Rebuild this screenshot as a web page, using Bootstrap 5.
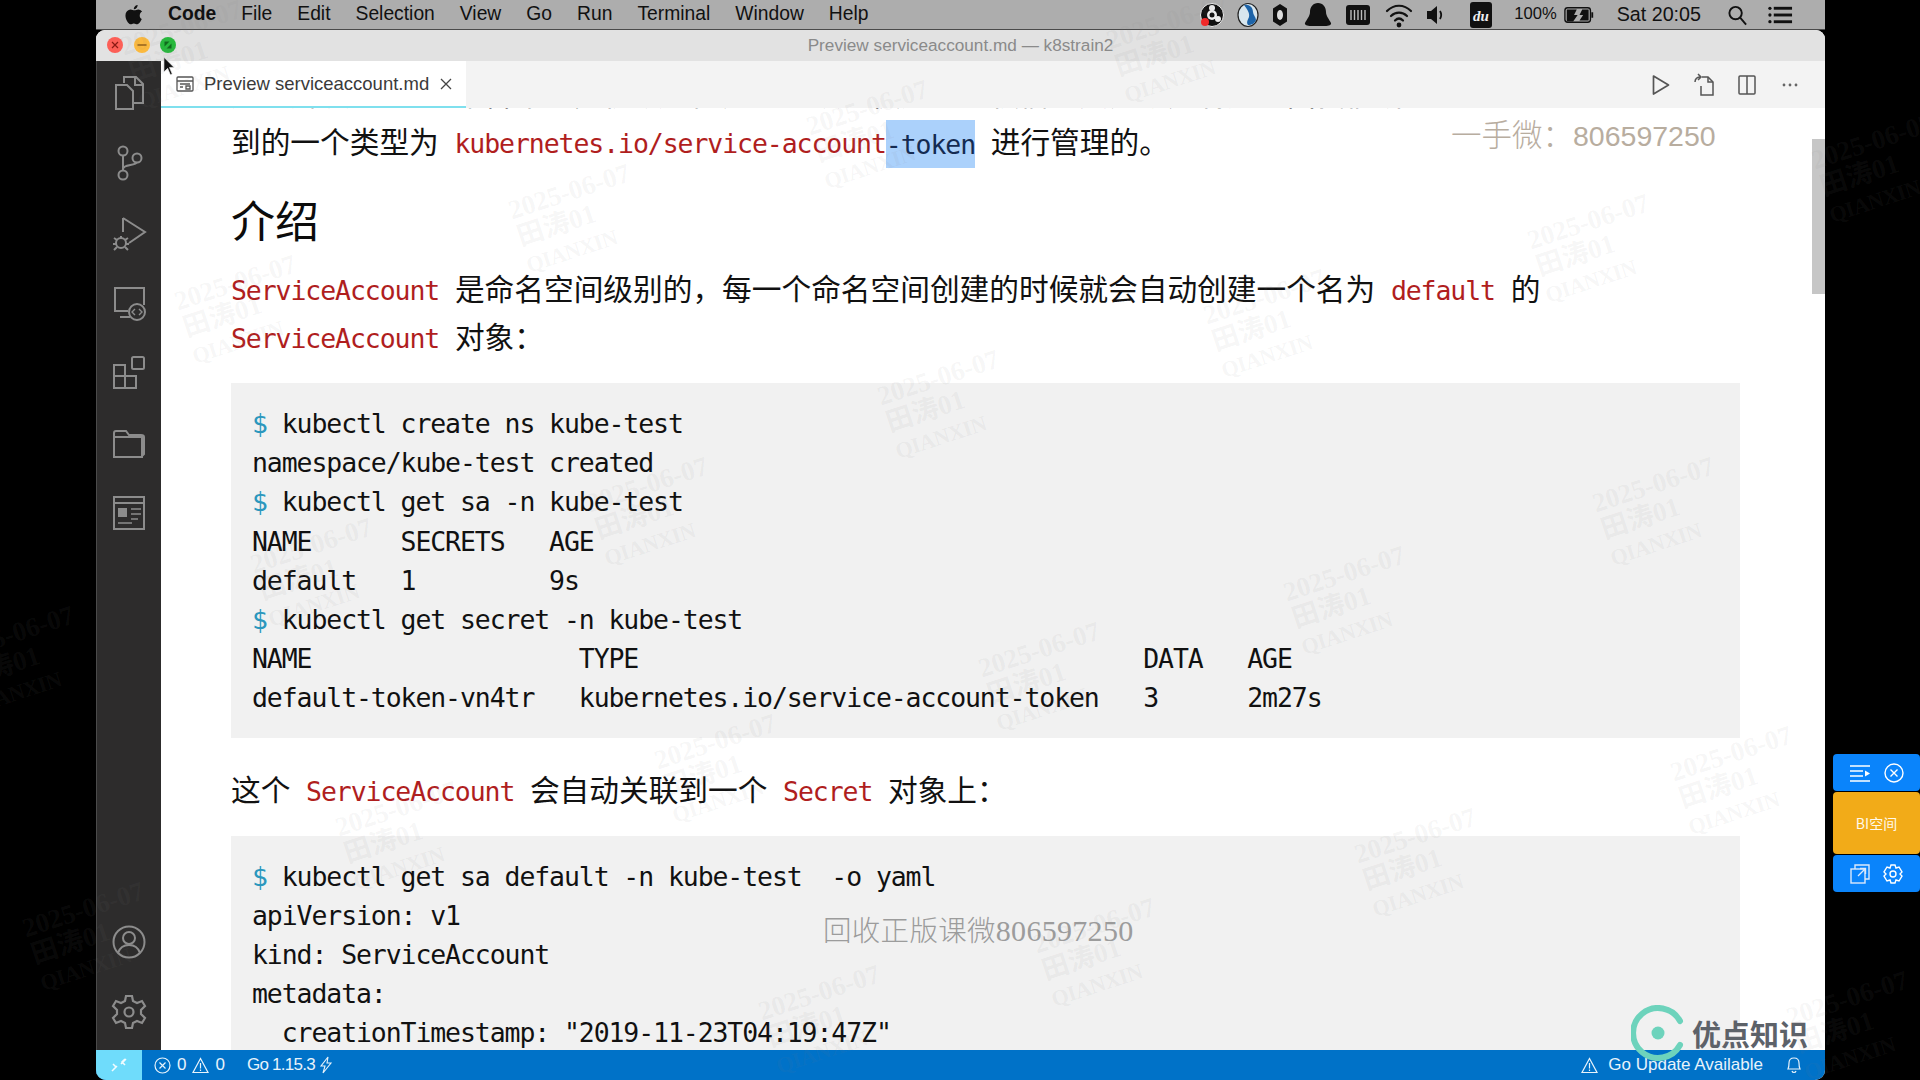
<!DOCTYPE html>
<html lang="zh-CN">
<head>
<meta charset="utf-8">
<title>Preview serviceaccount.md — k8strain2</title>
<link href="https://cdn.jsdelivr.net/npm/bootstrap@5.3.0/dist/css/bootstrap.min.css" rel="stylesheet">
<style>
html,body{height:100%;margin:0;background:#000;overflow:hidden}
body{font-family:"Liberation Sans","Noto Sans CJK SC",sans-serif}
.stage{width:1920px;height:1080px;position:relative;overflow:hidden;background:#000}
.mac-shell{width:1729px;height:1080px;margin-left:96px}
.mac-menu{height:30px;background:#adadad;border-bottom:1px solid #4a4a4a;padding:0 32px 0 29px;font-size:19.3px;color:#111;gap:25px}
.mac-menu b{font-weight:700}
.tray-pct{font-size:16.6px;margin-left:21px}
.tray-time{font-size:19.7px;margin-left:22px}
.t10{margin-left:10px}.t9{margin-left:9px}.t13{margin-left:13px}.t12{margin-left:12px}.t14{margin-left:14px}.t24{margin-left:24px}.t8{margin-left:7px}.t27{margin-left:26px}.t20{margin-left:20px}
.win{height:1050px;border-radius:9px 9px 10px 10px;overflow:hidden;background:#fff}
.title-row{height:31px;background:#e2e2e2;color:#8a8a8a;font-size:17.2px;position:relative;padding-top:1px}
.lights{left:11px;top:7px;gap:10.500px}
.body-row{height:989px}
.act-bar{width:65px;background:#2d2c2c;border-left:1px solid #4b4b4b;flex:none}
.act-item{height:70px;padding-bottom:6px}
.editor{min-width:0}
.tab-row{height:47px;background:#f3f3f3;flex:none}
.doc-tab{width:305px;height:47px;background:#fff;border-bottom:2px solid #7fe0ee;padding:0 0 0 15px;color:#3a3a3a;font-size:18.5px;gap:10px}
.tab-actions{padding-right:14px}
.tab-act{width:43px}
.doc{padding:0 85px 0 70px;font-family:"Noto Sans CJK SC",sans-serif;font-size:29.7px;line-height:48px;color:#111;word-spacing:9px;overflow:hidden;min-height:0}
.doc p{margin:0;white-space:nowrap}
.doc .lead-para{margin-top:-39px}
.doc h2{font-family:"Noto Sans CJK SC",sans-serif;font-size:44px;line-height:55px;margin:27px 0 17px;font-weight:400;color:#0c0c0c}
.doc .inl{font-family:"DejaVu Sans Mono",monospace;font-size:26.5px;letter-spacing:-1.08px;color:#b01e1e;word-spacing:0;line-height:1}
.doc .sel{background:#abd1fb;color:#142b52;padding:8.500px 0}
.code-box{margin:23px 0 27px;padding:21px 21px 20px;background:#f1f1f1;font-family:"DejaVu Sans Mono",monospace;font-size:26.5px;letter-spacing:-1.1px;line-height:39.2px;color:#111;word-spacing:0;overflow:hidden}
.code-box .pr{color:#2b97bd}
.code-box.last-box{margin-bottom:0}
.scroll-thumb{right:0;top:78px;width:13px;height:155px;background:#c6c6c6}
.status{height:30px;background:#0072c8;color:#e8f3fb;font-size:17px;flex:none;padding-right:23px}
.remote{width:46px;height:30px;background:#6fdcfb}
.st-gap{gap:6px}
.st-errs{margin-left:12px}
.st-go{margin-left:22px}
.go-ver{letter-spacing:-.75px}
.st-warn{margin-left:10px}
.st-bell{margin-left:23px}
.mark-a{left:1451px;top:111px;font-family:"Noto Sans CJK SC",sans-serif;font-weight:300;font-size:30.500px;color:#b8ad9f;line-height:44px;white-space:nowrap}
.mark-a span{font-family:"Liberation Sans",sans-serif;font-size:28.500px}
.mark-b{left:823px;top:909px;font-family:"Noto Sans CJK SC",sans-serif;font-size:28.500px;color:#9c9c9c;line-height:40px;white-space:nowrap;font-weight:300;letter-spacing:.3px}
.mark-b span{font-family:"Liberation Serif",serif;font-size:30px}
.wmk{position:absolute;transform:translate(-50%,-50%) rotate(-18deg);font-family:"Liberation Serif","Noto Sans CJK SC",serif;font-weight:700;font-size:27px;line-height:28px;color:rgba(128,128,128,.08);text-align:left;white-space:nowrap;pointer-events:none;z-index:20}
.wmk-name{font-size:22px;letter-spacing:-.5px}
.float-tool{left:1833px;top:754px;width:87px;gap:1px;color:#fff}
.tool-blue{height:37px;background:#0a84fb;border-radius:4px;gap:13px}
.tool-orange{height:62px;background:#f2ab18;border-radius:4px;font-size:14px;color:#fff9ea;font-family:"Noto Sans CJK SC",sans-serif}
.brand{left:1631px;top:1005px;gap:7px;z-index:30}
.brand span{font-family:"Noto Sans CJK SC",sans-serif;font-weight:700;font-size:29px;color:#5d6269;line-height:56px}
.cursor-mark{left:163px;top:57px;z-index:40}
</style>
</head>
<body>
<div class="stage">
  <div class="mac-shell d-flex flex-column">
    <div class="mac-menu d-flex align-items-center">
      <svg width="18" height="21" viewBox="0 0 22 25"><path fill="#111" d="M15.400 1c.1 1.500-.5 2.800-1.300 3.700-.9 1-2.100 1.600-3.300 1.500-.2-1.300.5-2.700 1.200-3.500C12.900 1.700 14.300 1 15.400 1zM20.500 18c-.6 1.300-.9 1.900-1.600 3-1 1.500-2.400 3.400-4.100 3.400-1.500 0-1.900-1-4-1-2 0-2.500 1-4 1-1.700 0-3-1.700-4-3.200C.2 17-.1 12 1.700 9.300 3 7.400 5 6.300 6.900 6.300s3.100 1.100 4.700 1.100c1.500 0 2.400-1.100 4.600-1.100 1.700 0 3.400.9 4.700 2.500-4.100 2.300-3.500 8.100-.4 9.200z"/></svg>
      <b>Code</b><span>File</span><span>Edit</span><span>Selection</span><span>View</span><span>Go</span><span>Run</span><span>Terminal</span><span>Window</span><span>Help</span>
      <div class="d-flex align-items-center ms-auto">
        <svg width="26" height="26" viewBox="0 0 26 26"><circle cx="13" cy="13" r="11.500" fill="#111" stroke="#eee" stroke-width="1"/><circle cx="13" cy="13" r="5" fill="#eee"/><circle cx="13" cy="13" r="2.500" fill="#111"/><circle cx="13" cy="6" r="3" fill="#eee"/><circle cx="19" cy="17" r="3" fill="#eee"/><circle cx="6" cy="20" r="4" fill="#f02a2a"/></svg>
        <svg width="26" height="26" viewBox="0 0 26 26" class="t10"><ellipse cx="13" cy="13" rx="10" ry="11.500" fill="#d8e6ee" stroke="#222" stroke-width="1.200"/><path fill="#1c63a8" d="M9 3c5-1 9 2 9 7 0 3 3 5 3 8-1 3-4 5-8 5-2-3 0-5 1-8 1-4-2-8-5-12z"/></svg>
        <svg width="20" height="26" viewBox="0 0 20 26" class="t9"><path fill="#111" d="M10 2l7 4.500v13L10 24l-7-4.500v-13z"/><ellipse cx="10" cy="13" rx="3" ry="5" fill="#ddd"/></svg>
        <svg width="30" height="26" viewBox="0 0 30 26" class="t13"><path fill="#111" d="M15 1c5 0 8 4 8 9 0 4 3 7 5 11 .6 2-2 3-6 3H8c-4 0-6.600-1-6-3 2-4 5-7 5-11 0-5 3-9 8-9z"/></svg>
        <svg width="26" height="24" viewBox="0 0 26 24" class="t12"><rect x="1" y="2" width="24" height="20" rx="3" fill="#111"/><g stroke="#bbb" stroke-width="1.400"><path d="M6 7v10M9.500 7v10M13 7v10M16.500 7v10M20 7v10"/></g></svg>
        <svg width="28" height="26" viewBox="0 0 28 26" class="t14" fill="none" stroke="#111" stroke-width="2.200" stroke-linecap="round"><path d="M2 9c7-7 17-7 24 0M6 14c4.500-4.500 11.500-4.500 16 0M10 18.500c2.500-2.500 5.500-2.500 8 0"/><circle cx="14" cy="23" r="1.300" fill="#111"/></svg>
        <svg width="20" height="24" viewBox="0 0 20 24" class="t12"><path fill="#111" d="M2 8h4l6-5v18l-6-5H2z"/><path d="M15 8c1.500 2.500 1.500 5.500 0 8" stroke="#111" stroke-width="1.800" fill="none"/></svg>
        <svg width="24" height="28" viewBox="0 0 24 28" class="t24"><rect x="1" y="1" width="22" height="26" rx="3" fill="#111"/><text x="12" y="20" text-anchor="middle" fill="#eee" font-family="Liberation Serif,serif" font-style="italic" font-weight="700" font-size="15">du</text></svg>
        <span class="tray-pct">100%</span>
        <svg width="31" height="20" viewBox="0 0 34 20" class="t8"><rect x="1" y="2" width="28" height="16" rx="3" fill="none" stroke="#111" stroke-width="1.500"/><path fill="#111" d="M3 4h11l-3 6h4l-5 7H3zM20 4h7v12h-10l4-6h-4z"/><rect x="30" y="7" width="2" height="6" fill="#111"/></svg>
        <span class="tray-time">Sat 20:05</span>
        <svg width="21" height="24" viewBox="0 0 22 24" class="t27" fill="none" stroke="#111" stroke-width="2"><circle cx="9" cy="10" r="6.500"/><path d="M14 15l6 7"/></svg>
        <svg width="25" height="20" viewBox="0 0 26 20" class="t20" fill="#111"><circle cx="2" cy="3" r="1.700"/><circle cx="2" cy="10" r="1.700"/><circle cx="2" cy="17" r="1.700"/><rect x="6" y="1.500" width="19" height="3"/><rect x="6" y="8.500" width="19" height="3"/><rect x="6" y="15.500" width="19" height="3"/></svg>
      </div>
    </div>
    <div class="win d-flex flex-column">
      <div class="title-row d-flex align-items-center justify-content-center">
        <div class="lights position-absolute d-flex">
          <svg width="16" height="16" viewBox="0 0 16 16"><circle cx="8" cy="8" r="8" fill="#fc5f57"/><path d="M5 5l6 6M11 5l-6 6" stroke="#8a1a14" stroke-width="1.200"/></svg>
          <svg width="16" height="16" viewBox="0 0 16 16"><circle cx="8" cy="8" r="8" fill="#fbb93e"/><path d="M3.500 8h9" stroke="#93601a" stroke-width="1.400"/></svg>
          <svg width="16" height="16" viewBox="0 0 16 16"><circle cx="8" cy="8" r="8" fill="#27b83c"/><path d="M4.500 4.500h5l-5 5zM11.500 11.500h-5l5-5z" fill="#0f6a1c"/></svg>
        </div>
        <span>Preview serviceaccount.md — k8strain2</span>
      </div>
      <div class="body-row d-flex">
        <div class="act-bar d-flex flex-column">
          <div class="act-item d-flex align-items-center justify-content-center"><svg width="36" height="38" viewBox="0 0 36 38" fill="none" stroke="#8c8c8c" stroke-width="2"><path d="M13 9V3h12l7 7v19H22"/><path d="M24 3v8h8"/><path d="M5 11h11l6 6v18H5z"/></svg></div>
          <div class="act-item d-flex align-items-center justify-content-center"><svg width="36" height="38" viewBox="0 0 36 38" fill="none" stroke="#8c8c8c" stroke-width="2"><circle cx="12" cy="7" r="4.500"/><circle cx="12" cy="31" r="4.500"/><circle cx="26" cy="14" r="4.500"/><path d="M12 12v14M12 25c0-5 13-3 14-7"/></svg></div>
          <div class="act-item d-flex align-items-center justify-content-center"><svg width="36" height="38" viewBox="0 0 36 38" fill="none" stroke="#8c8c8c" stroke-width="2"><path d="M12 4l22 14-16 11M12 4v14"/><circle cx="10" cy="29" r="5"/><path d="M10 24v-2M3 24l3 2M17 24l-3 2M2 30h3M18 30h-3M3 36l3-3M17 36l-3-3"/></svg></div>
          <div class="act-item d-flex align-items-center justify-content-center"><svg width="36" height="38" viewBox="0 0 36 38" fill="none" stroke="#8c8c8c" stroke-width="2"><path d="M17 27H4V4h29v17"/><path d="M9 33h10"/><circle cx="26" cy="28" r="8"/><path d="M24 25l-3 3 3 3M28 25l3 3-3 3" stroke-width="1.400"/></svg></div>
          <div class="act-item d-flex align-items-center justify-content-center"><svg width="36" height="38" viewBox="0 0 36 38" fill="none" stroke="#8c8c8c" stroke-width="2"><rect x="3" y="11" width="11" height="11"/><rect x="3" y="22" width="11" height="12"/><rect x="14" y="22" width="11" height="12"/><rect x="21" y="3" width="12" height="12" rx="1.500"/></svg></div>
          <div class="act-item d-flex align-items-center justify-content-center"><svg width="36" height="38" viewBox="0 0 36 38" fill="none" stroke="#8c8c8c" stroke-width="2"><path d="M3 33V13h28v20z"/><path d="M3 13V9c0-1 1-2 2-2h10l3 4h12c2 0 3 1 3 2v17l-2 2"/></svg></div>
          <div class="act-item d-flex align-items-center justify-content-center"><svg width="36" height="38" viewBox="0 0 36 38" fill="none" stroke="#8c8c8c" stroke-width="2"><rect x="3" y="3" width="30" height="32"/><path d="M3 9h30"/><rect x="7" y="14" width="9" height="9" fill="#8c8c8c" stroke="none"/><path d="M20 15h10M20 20h10M20 25h7M7 29h14" stroke-width="1.600"/></svg></div>
          <div class="flex-grow-1"></div>
          <div class="act-item d-flex align-items-center justify-content-center"><svg width="36" height="36" viewBox="0 0 36 36" fill="none" stroke="#8c8c8c" stroke-width="2"><circle cx="18" cy="18" r="15.500"/><circle cx="18" cy="14" r="6"/><path d="M7 29c2-6 6-8 11-8s9 2 11 8"/></svg></div>
          <div class="act-item d-flex align-items-center justify-content-center"><svg width="36" height="36" viewBox="0 0 36 36" fill="none" stroke="#8c8c8c" stroke-width="2.200"><circle cx="18" cy="18" r="4.500"/><path d="M15 2h6l1 5 4 2 5-2 3 5-4 4v4l4 4-3 5-5-2-4 2-1 5h-6l-1-5-4-2-5 2-3-5 4-4v-4l-4-4 3-5 5 2 4-2z"/></svg></div>
        </div>
        <div class="editor flex-grow-1 d-flex flex-column position-relative">
          <div class="tab-row d-flex justify-content-between">
            <div class="doc-tab d-flex align-items-center">
              <svg width="18" height="18" viewBox="0 0 18 18" fill="none" stroke="#555" stroke-width="1.300"><rect x="1" y="2" width="16" height="14" rx="1"/><path d="M1 6h16M4 9h10M4 12h3M10 11h4v3h-4z"/></svg>
              <span>Preview serviceaccount.md</span>
              <svg width="14" height="14" viewBox="0 0 14 14" stroke="#444" stroke-width="1.300"><path d="M2 2l10 10M12 2L2 12"/></svg>
            </div>
            <div class="tab-actions d-flex align-items-center">
              <div class="tab-act d-flex justify-content-center"><svg width="20" height="24" viewBox="0 0 20 24" fill="none" stroke="#555" stroke-width="1.700"><path d="M2.500 3l15 9-15 9z" stroke-linejoin="round"/></svg></div>
              <div class="tab-act d-flex justify-content-center"><svg width="22" height="24" viewBox="0 0 22 24" fill="none" stroke="#555" stroke-width="1.500"><path d="M9 4h6l5 5v13H8v-9"/><path d="M15 4v5h5"/><path d="M2 9c0-3 2-5 6-5M5 1l3 3-3 3"/></svg></div>
              <div class="tab-act d-flex justify-content-center"><svg width="20" height="22" viewBox="0 0 20 22" fill="none" stroke="#555" stroke-width="1.500"><rect x="2" y="2" width="16" height="18" rx="1"/><path d="M10 2v18"/></svg></div>
              <div class="tab-act d-flex justify-content-center"><svg width="18" height="6" viewBox="0 0 18 6" fill="#666"><circle cx="3" cy="3" r="1.400"/><circle cx="9" cy="3" r="1.400"/><circle cx="15" cy="3" r="1.400"/></svg></div>
            </div>
          </div>
          <main class="doc flex-grow-1">
            <p class="lead-para">用于解决 <span class="inl">Pod</span> 在集群中的身份认证问题的。认证使用的授权信息其实就是利用前面我们讲<br>到的一个类型为 <span class="inl">kubernetes.io/service-account<span class="sel">-token</span></span> 进行管理的。</p>
            <h2>介绍</h2>
            <p><span class="inl">ServiceAccount</span> 是命名空间级别的，每一个命名空间创建的时候就会自动创建一个名为 <span class="inl">default</span> 的<br><span class="inl">ServiceAccount</span> 对象：</p>
            <pre class="code-box"><span class="pr">$</span> kubectl create ns kube-test
namespace/kube-test created
<span class="pr">$</span> kubectl get sa -n kube-test
NAME      SECRETS   AGE
default   1         9s
<span class="pr">$</span> kubectl get secret -n kube-test
NAME                  TYPE                                  DATA   AGE
default-token-vn4tr   kubernetes.io/service-account-token   3      2m27s</pre>
            <p>这个 <span class="inl">ServiceAccount</span> 会自动关联到一个 <span class="inl">Secret</span> 对象上：</p>
            <pre class="code-box last-box"><span class="pr">$</span> kubectl get sa default -n kube-test  -o yaml
apiVersion: v1
kind: ServiceAccount
metadata:
  creationTimestamp: "2019-11-23T04:19:47Z"</pre>
          </main>
          <div class="scroll-thumb position-absolute"></div>
        </div>
      </div>
      <div class="status d-flex align-items-center">
        <div class="remote d-flex align-items-center justify-content-center"><svg width="18" height="18" viewBox="0 0 18 18" fill="none" stroke="#fff" stroke-width="1.600"><path d="M2 15l5-5M3 8l3 3-3 3M16 3l-5 5M15 9l-3-3 3-3" opacity=".9"/></svg></div>
        <div class="d-flex align-items-center st-gap st-errs">
          <svg width="17" height="17" viewBox="0 0 17 17" fill="none" stroke="#e8f3fb" stroke-width="1.200"><circle cx="8.500" cy="8.500" r="7.500"/><path d="M5.500 5.500l6 6M11.500 5.500l-6 6"/></svg><span>0</span>
          <svg width="17" height="17" viewBox="0 0 17 17" fill="none" stroke="#e8f3fb" stroke-width="1.200"><path d="M8.500 1.500L16 15.500H1z"/><path d="M8.500 6v5.500M8.500 12.500v1.500"/></svg><span>0</span>
        </div>
        <div class="d-flex align-items-center st-go"><span class="go-ver">Go 1.15.3</span><svg width="14" height="18" viewBox="0 0 14 18" fill="none" stroke="#e8f3fb" stroke-width="1.100" class="ms-1"><path d="M9 1L2 10h4l-2 7 8-10H8z"/></svg></div>
        <div class="d-flex align-items-center ms-auto">
          <svg width="17" height="17" viewBox="0 0 17 17" fill="none" stroke="#e8f3fb" stroke-width="1.200"><path d="M8.500 1.500L16 15.500H1z"/><path d="M8.500 6v5.500M8.500 12.500v1.500"/></svg>
          <span class="st-warn">Go Update Available</span>
          <svg width="16" height="18" viewBox="0 0 16 18" fill="none" stroke="#e8f3fb" stroke-width="1.200" class="st-bell"><path d="M2 13c1-2 1-4 1-6 0-3 2-5 5-5s5 2 5 5c0 2 0 4 1 6zM6 15c.5 2 3.500 2 4 0"/></svg>
        </div>
      </div>
    </div>
  </div>

  <div class="mark-a position-absolute">一手微：<span>806597250</span></div>
  <div class="mark-b position-absolute">回收正版课微<span>806597250</span></div>

  <div class="float-tool position-absolute d-flex flex-column">
    <div class="tool-blue d-flex align-items-center justify-content-center">
      <svg width="21" height="18" viewBox="0 0 21 18" stroke="#fff" stroke-width="1.500"><path d="M0 2h20M0 7h13M0 12h13M0 17h20"/><path d="M15 6.500l5 3-5 3z" fill="#fff" stroke="none"/></svg>
      <svg width="20" height="20" viewBox="0 0 20 20" fill="none" stroke="#fff" stroke-width="1.400"><circle cx="10" cy="10" r="9"/><path d="M6.500 6.500l7 7M13.500 6.500l-7 7"/></svg>
    </div>
    <div class="tool-orange d-flex align-items-center justify-content-center">BI空间</div>
    <div class="tool-blue d-flex align-items-center justify-content-center">
      <svg width="20" height="20" viewBox="0 0 20 20" fill="none" stroke="#dce9fb" stroke-width="1.400"><path d="M5 5V1h14v14h-4"/><rect x="1" y="5" width="14" height="14"/><path d="M8 12l7-7M10 4.500h5.500V10"/></svg>
      <svg width="20" height="20" viewBox="0 0 20 20" fill="none" stroke="#fff" stroke-width="1.400"><circle cx="10" cy="10" r="3"/><path d="M8 1h4l1 3 3-1 3 5-2 2 2 2-3 5-3-1-1 3H8l-1-3-3 1-3-5 2-2-2-2 3-5 3 1z"/></svg>
    </div>
  </div>

  <div class="brand position-absolute d-flex align-items-center">
    <svg width="54" height="56" viewBox="0 0 54 56" fill="none"><path d="M49 16A25 25 0 1 0 49 40" stroke="#6dd3bc" stroke-width="6" stroke-linecap="round"/><circle cx="27" cy="28" r="6.500" fill="#6dd3bc"/></svg>
    <span>优点知识</span>
  </div>

  <svg class="cursor-mark position-absolute" width="12" height="19" viewBox="0 0 13 20"><path d="M1 0l11 11H7l3 7-2 1-3-7-4 4z" fill="#111" stroke="#eee" stroke-width=".7"/></svg>
  <div id="wm"></div>
</div>
<script>
// watermark centres, measured on the 1568-wide reference
var spots=[[155,45],[472,179],[1304,203],[1040,265],[199,253],[773,331],[1357,418],[1105,491],[856,553],[591,628],[1421,638],[1163,705],[331,683],[676,833],[901,778],[536,418],[261,468],[18,540],[75,765],[1536,138],[1516,838],[960,40],[715,110]];
var host=document.getElementById('wm');
spots.forEach(function(s){
  var d=document.createElement('div');d.className='wmk';
  d.innerHTML='2025-06-07<br>田涛01<br><span class="wmk-name">QIANXIN</span>';
  host.appendChild(d);
  d.style.left=(s[0]*1.2245)+'px';d.style.top=(s[1]*1.2245)+'px';
});
</script>
<script src="https://cdn.jsdelivr.net/npm/bootstrap@5.3.0/dist/js/bootstrap.bundle.min.js"></script>
</body>
</html>
